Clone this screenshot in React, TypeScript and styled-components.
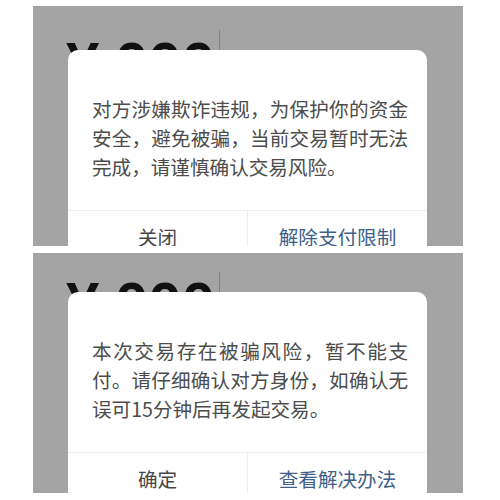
import styled, { createGlobalStyle } from "styled-components";

const GlobalStyle = createGlobalStyle`
  html, body {
    margin: 0;
    padding: 0;
    background: #ffffff;
  }
  body {
    font-family: "Noto Sans CJK SC", "Noto Sans", sans-serif;
  }
`;

interface Alert {
  message: string;
  cancel: string;
  action: string;
  amountTop: number;
  lineTop: number;
  dialogTop: number;
}

const alerts: Alert[] = [
  {
    message: "对方涉嫌欺诈违规，为保护你的资金安全，避免被骗，当前交易暂时无法完成，请谨慎确认交易风险。",
    cancel: "关闭",
    action: "解除支付限制",
    amountTop: 28,
    lineTop: 24,
    dialogTop: 44,
  },
  {
    message: "本次交易存在被骗风险，暂不能支付。请仔细确认对方身份，如确认无误可15分钟后再发起交易。",
    cancel: "确定",
    action: "查看解决办法",
    amountTop: 21,
    lineTop: 19,
    dialogTop: 39,
  },
];

const AlertPanel = ({ alert }: { alert: Alert }) => {
  return (
    <Panel>
      <AmountRow $top={alert.amountTop}>
        <Currency>¥</Currency>
        <Digits>000</Digits>
        <Caret $top={alert.lineTop - alert.amountTop} />
      </AmountRow>
      <Dialog $top={alert.dialogTop}>
        <Message>{alert.message}</Message>
        <Actions>
          <ActionButton>{alert.cancel}</ActionButton>
          <ActionButton $primary>{alert.action}</ActionButton>
        </Actions>
      </Dialog>
    </Panel>
  );
};

export default function App() {
  return (
    <>
      <GlobalStyle />
      <Page>
        {alerts.map((val, key) => (
          <AlertPanel key={key} alert={val} />
        ))}
      </Page>
    </>
  );
}

const Page = styled.div`
  width: 500px;
  height: 500px;
  box-sizing: border-box;
  padding: 6px 0 0 33px;
  display: flex;
  flex-direction: column;
  gap: 7px;
`;

const Panel = styled.div`
  position: relative;
  width: 430px;
  height: 240px;
  background: #a4a4a4;
  overflow: hidden;
`;

const AmountRow = styled.div<{ $top: number }>`
  display: flex;
  align-items: flex-start;
  padding: ${(p) => p.$top}px 0 0 33px;
  font-family: "Liberation Sans", Arial, sans-serif;
  font-weight: 700;
  font-size: 60px;
  line-height: 1;
  color: #111111;
`;

const Currency = styled.span`
  width: 49px;
`;

const Digits = styled.span`
  letter-spacing: 0px;
`;

const Caret = styled.div<{ $top: number }>`
  width: 1px;
  height: 24px;
  margin: ${(p) => p.$top}px 0 0 4px;
  background: #808080;
`;

const Dialog = styled.div<{ $top: number }>`
  position: absolute;
  left: 35px;
  top: ${(p) => p.$top}px;
  width: 359px;
  background: #ffffff;
  border-radius: 10px 10px 0 0;
`;

const Message = styled.div`
  padding: 44px 19px 29px 24px;
  font-size: 19.6px;
  line-height: 29px;
  color: #4c4c4c;
  text-align: justify;
  line-break: strict;
`;

const Actions = styled.div`
  display: flex;
  border-top: 1px solid #efefef;
`;

const ActionButton = styled.div<{ $primary?: boolean }>`
  flex: 1;
  height: 54px;
  line-height: 52px;
  text-align: center;
  font-size: 19.6px;
  color: ${(p) => (p.$primary ? "#40608a" : "#474747")};
  & + & {
    border-left: 1px solid #efefef;
  }
`;
